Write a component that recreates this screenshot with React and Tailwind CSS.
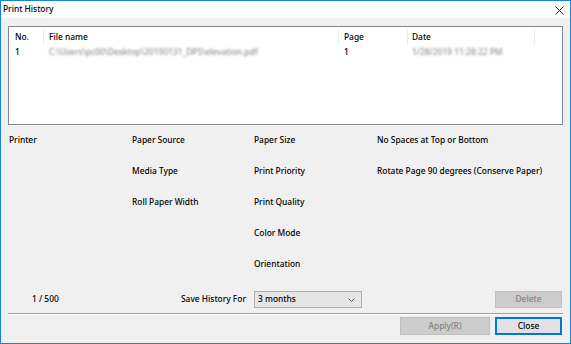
import React from 'react';

const cols = [
  ['Printer'],
  ['Paper Source', 'Media Type', 'Roll Paper Width'],
  ['Paper Size', 'Print Priority', 'Print Quality', 'Color Mode', 'Orientation'],
  ['No Spaces at Top or Bottom', 'Rotate Page 90 degrees (Conserve Paper)'],
];

const App = () => {
  return (
    <div
      className="w-[571px] h-[344px] flex flex-col border border-[#1883d7] bg-[#f0f0f0] text-[8.4px] font-medium text-black whitespace-nowrap"
      style={{ fontFamily: '"Noto Sans", "Open Sans", sans-serif' }}
    >
      {/* Title bar */}
      <div className="h-[17px] bg-white flex items-center justify-between pl-[2px] pr-[6px] leading-none">
        <span>Print History</span>
        <svg width="9" height="9" viewBox="0 0 9 9" className="text-[#222] mt-[1px]">
          <path d="M0.5 0.5 L8.5 8.5 M8.5 0.5 L0.5 8.5" stroke="currentColor" strokeWidth="1" />
        </svg>
      </div>

      <div className="flex-1 flex flex-col px-[7px] pt-[8px]">
        {/* History list */}
        <div className="h-[99px] border border-[#828790] bg-white">
          <div className="flex h-[16px] mt-[2px] items-center leading-none">
            <div className="w-[35px] pl-[6px] h-full flex items-center border-r border-[#ececec]">No.</div>
            <div className="w-[295px] pl-[5px] h-full flex items-center border-r border-[#ececec]">File name</div>
            <div className="w-[69px] pl-[5px] h-full flex items-center border-r border-[#ececec]">Page</div>
            <div className="w-[127px] pl-[4px] h-full flex items-center border-r border-[#ececec]">Date</div>
          </div>
          <div className="flex h-[15px] items-center leading-none">
            <div className="w-[35px] pl-[6px]">1</div>
            <div className="w-[295px] pl-[5px] text-[#8f8f8f] blur-[1px]">C:\Users\pc00\Desktop\20190131_DPS\elevation.pdf</div>
            <div className="w-[69px] pl-[5px]">1</div>
            <div className="w-[127px] pl-[4px] text-[#8f8f8f] blur-[1px]">1/28/2019 11:28:22 PM</div>
          </div>
        </div>

        {/* Print settings */}
        <div className="grid grid-cols-[123px_122px_123px_1fr] pt-[9px] leading-none">
          {cols.map((col, i) => (
            <div key={i} className="flex flex-col gap-[19px] pl-[1px]">
              {col.map((label) => (
                <div key={label} className="h-[12px] flex items-center">{label}</div>
              ))}
            </div>
          ))}
        </div>

        <div className="flex-1" />

        {/* History controls */}
        <div className="flex items-center h-[17px] leading-none">
          <div className="w-[173px] pl-[24px]">1 / 500</div>
          <div className="w-[73px]">Save History For</div>
          <div className="w-[108px] h-[17px] border border-[#adadad] bg-[#e5e5e5] flex items-center justify-between pl-[3px] pr-[6px]">
            <span>3 months</span>
            <svg width="7" height="4" viewBox="0 0 7 4">
              <path d="M0.5 0.5 L3.5 3.5 L6.5 0.5" fill="none" stroke="#555" strokeWidth="1" />
            </svg>
          </div>
          <div className="flex-1" />
          <button className="w-[67px] h-[17px] border border-[#bfbfbf] bg-[#cccccc] text-[#838383] font-medium leading-none mr-[1px]">
            Delete
          </button>
        </div>

        <div className="mt-[5px] border-t border-[#a0a0a0] border-b border-b-white" />

        <div className="flex justify-end gap-[5px] pt-[2px] pb-[8px] pr-[1px] leading-none">
          <button className="w-[90px] h-[18px] border border-[#bfbfbf] bg-[#cccccc] text-[#838383] font-medium">Apply(R)</button>
          <button className="w-[67px] h-[18px] border-2 border-[#0078d7] bg-[#e1e1e1] font-medium">Close</button>
        </div>
      </div>
    </div>
  );
};

export default App;
